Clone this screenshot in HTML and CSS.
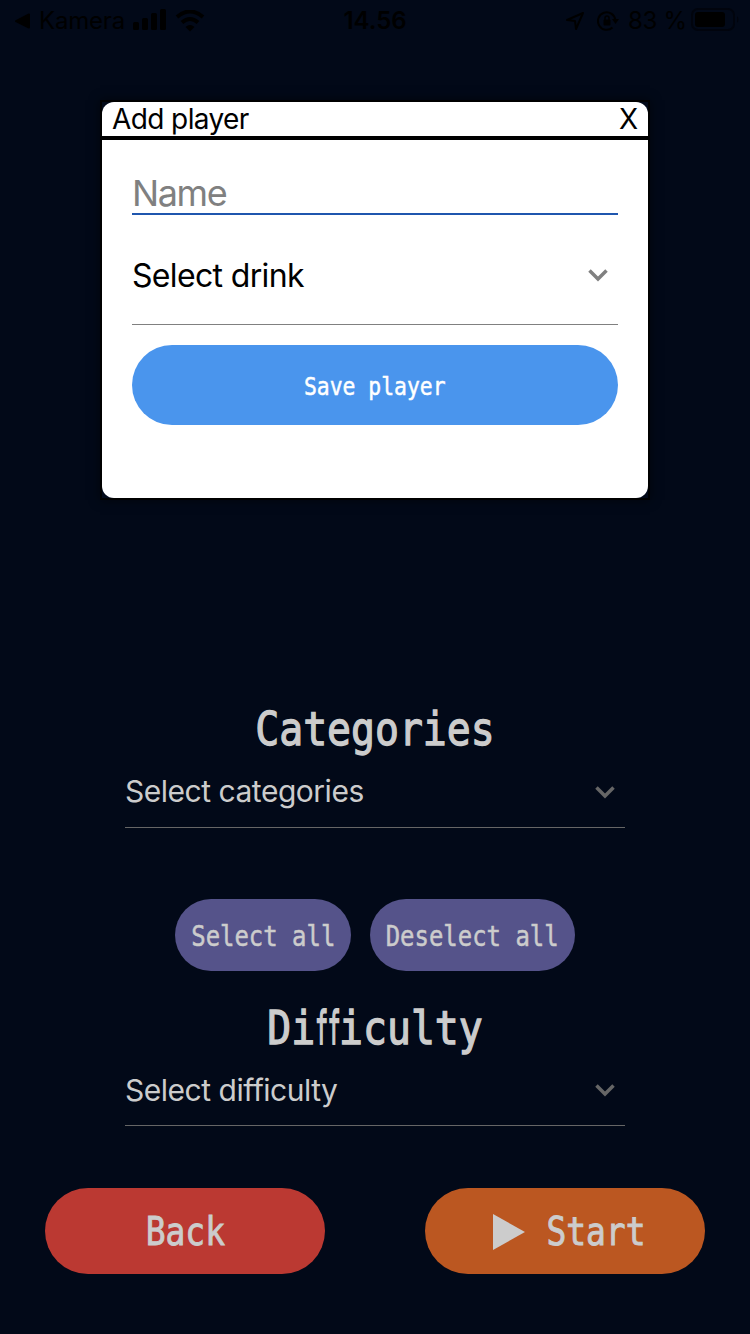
FILE: index.html
```html
<!DOCTYPE html>
<html lang="en">
<head>
<meta charset="utf-8">
<title>Add player</title>
<link rel="stylesheet" href="styles.css">
</head>
<body>
<div class="screen">
  <header class="status">
    <div class="status-left">
      <svg width="16" height="16" viewBox="0 0 16 16"><path d="M1 8.200 14 1.500V14.500Z" stroke="#000" stroke-width="2" stroke-linejoin="round"/></svg>
      <span class="kamera">Kamera</span>
      <svg class="signal" width="34" height="22" viewBox="0 0 34 22"><rect x="0" y="13" width="6" height="8" rx="1.500"/><rect x="9" y="9" width="6" height="12" rx="1.500"/><rect x="18" y="4" width="6" height="17" rx="1.500"/><rect x="27" y="0" width="6" height="21" rx="1.500"/></svg>
      <svg class="wifi" width="30" height="22" viewBox="0 0 30 22"><path d="M2 7Q15-4 28 7M7 12.500Q15 5.500 23 12.500" fill="none" stroke="#000" stroke-width="4"/><path d="M10.500 17Q15 13 19.500 17L15 21.500Z"/></svg>
    </div>
    <time class="clock">14.56</time>
    <div class="status-right">
      <svg width="18" height="18" viewBox="0 0 18 18"><path d="M1 8 17 1 10 17 9 9Z" fill="none" stroke="#000" stroke-width="2" stroke-linejoin="round"/></svg>
      <svg class="lock" width="22" height="20" viewBox="0 0 22 20"><path d="M15.500 16.500A8.700 8.700 0 1 1 18.300 9" fill="none" stroke="#000" stroke-width="2"/><path d="M15 8H22L18.500 13Z"/><rect x="6.500" y="8.500" width="7" height="6" rx="1"/><path d="M8 9V7A2 2 0 0 1 12 7V9" fill="none" stroke="#000" stroke-width="1.500"/></svg>
      <span class="percent">83 %</span>
      <svg class="battery" width="48" height="24" viewBox="0 0 48 24"><rect x="1" y="1" width="42" height="21" rx="6" fill="none" stroke="#01040d" stroke-width="2"/><rect x="4" y="4" width="30" height="15" rx="3"/><path d="M46 8Q49 11.500 46 15Z" fill="#01040d"/></svg>
    </div>
  </header>

  <section class="modal">
    <div class="card">
      <div class="modal-head"><span class="title">Add player</span><span class="close">X</span></div>
      <div class="modal-body">
        <div class="name-field">Name</div>
        <div class="select drink"><span>Select drink</span><svg class="chevron" width="20" height="13" viewBox="0 0 20 13"><path d="M1.500 1.500 10 10 18.500 1.500"/></svg></div>
        <div class="button save"><span class="pixel">Save player</span></div>
      </div>
    </div>
  </section>

  <main class="settings">
    <h2 class="heading"><span class="pixel">Categories</span></h2>
    <div class="select"><span>Select categories</span><svg class="chevron" width="20" height="13" viewBox="0 0 20 13"><path d="M1.500 1.500 10 10 18.500 1.500"/></svg></div>
    <div class="pair">
      <div class="button small all"><span class="pixel">Select all</span></div>
      <div class="button small none"><span class="pixel">Deselect all</span></div>
    </div>
    <h2 class="heading second"><span class="pixel">Di<span class="ligature">ff</span>iculty</span></h2>
    <div class="select"><span>Select difficulty</span><svg class="chevron" width="20" height="13" viewBox="0 0 20 13"><path d="M1.500 1.500 10 10 18.500 1.500"/></svg></div>
  </main>

  <footer class="actions">
    <div class="button large back"><span class="pixel">Back</span></div>
    <div class="button large start"><svg width="32" height="36" viewBox="0 0 32 36"><path d="M0 0 32 18 0 36Z" fill="#ccc"/></svg><span class="pixel">Start</span></div>
  </footer>
</div>
</body>
</html>
```
FILE: styles.css
```css
* { box-sizing: border-box; }
body { margin: 0; background: #020918; font-family: Inter, "Liberation Sans", sans-serif; }
svg { display: block; flex: none; }
.screen { width: 750px; height: 1334px; display: flex; flex-direction: column; overflow: hidden; background: #020918; color: #ccc; }
.status { height: 40px; padding-top: 1px; display: grid; grid-template-columns: 1fr 70px 1fr; align-items: center; color: #000; font-size: 24px; line-height: 39px; white-space: nowrap; }
.status-left, .status-right { display: flex; align-items: center; }
.status-left { padding-left: 15px; }
.kamera { width: 87px; margin-left: 8px; letter-spacing: -0.200px; }
.signal { margin-left: 7px; margin-top: -2px; }
.wifi { margin-left: 8px; }
.clock { font-weight: 600; text-align: center; }
.status-right { padding-left: 156px; }
.lock { margin-left: 13px; }
.percent { width: 60px; margin-left: 9px; letter-spacing: -0.300px; }
.battery { margin-left: 3px; margin-top: -2px; }
.modal { width: 550px; height: 400px; margin: 60px auto 0; border: 2px solid #000; background: #020918; box-shadow: 0 0 10px rgba(0, 0, 0, 0.55); color: #000; }
.card { height: 100%; border-radius: 12px; background: #fff; overflow: hidden; }
.modal-head { height: 38px; padding: 0 10px; border-bottom: 4px solid #000; display: flex; justify-content: space-between; font-size: 28px; line-height: 35px; }
.title { letter-spacing: -0.600px; }
.modal-body { padding: 30px; }
.name-field { height: 45px; border-bottom: 2px solid #1f56ae; color: #808080; font-size: 36px; line-height: 46px; letter-spacing: -1.400px; }
.select { height: 72px; padding: 0 10px 0 0; border-bottom: 1px solid #666; display: flex; justify-content: space-between; font-size: 30px; line-height: 71px; letter-spacing: -0.480px; }
.chevron { margin-top: 30px; fill: none; stroke: #666; stroke-width: 3.500; }
.drink { height: 100px; margin-top: 10px; border-color: #808080; font-size: 32px; line-height: 101px; letter-spacing: -0.660px; }
.drink .chevron { margin-top: 44px; stroke: #808080; }
.button { display: flex; align-items: center; justify-content: center; border-radius: 50px; }
.pixel { flex: none; font-family: "DejaVu Sans Mono", "Liberation Mono", monospace; font-weight: 400; line-height: 1; white-space: nowrap; transform: scaleX(0.855); -webkit-text-stroke: 0.5px currentColor; }
.save { height: 80px; margin-top: 20px; padding-top: 2px; background: #4a95ed; color: #fff; font-size: 25px; }
.settings { width: 500px; margin: 200px auto 0; }
.heading { height: 56px; margin: 0; padding-top: 3px; display: flex; align-items: center; justify-content: center; font-size: 46.500px; }
.heading .pixel { -webkit-text-stroke-width: 1.300px; }
.ligature { display: inline-block; width: 0.602em; transform: scaleX(0.53); transform-origin: left; -webkit-text-stroke-width: 2.200px; }
.pair { margin-top: 71px; padding: 0 50px; display: flex; justify-content: space-between; }
.small { height: 72px; padding-top: 4px; background: #55538a; font-size: 28px; }
.all { width: 176px; }
.none { width: 205px; }
.second { margin-top: 27px; height: 57px; }
.second + .select { height: 71px; line-height: 70px; }
.second + .select .chevron { margin-top: 29px; }
.actions { margin-top: 62px; padding: 0 45px; display: flex; justify-content: space-between; }
.large { width: 280px; height: 86px; padding-top: 2px; font-size: 38.500px; }
.large .pixel { -webkit-text-stroke-width: 0.900px; }
.back { background: #bb3932; }
.start { background: #bb5721; gap: 13px; padding-left: 17px; }
```
